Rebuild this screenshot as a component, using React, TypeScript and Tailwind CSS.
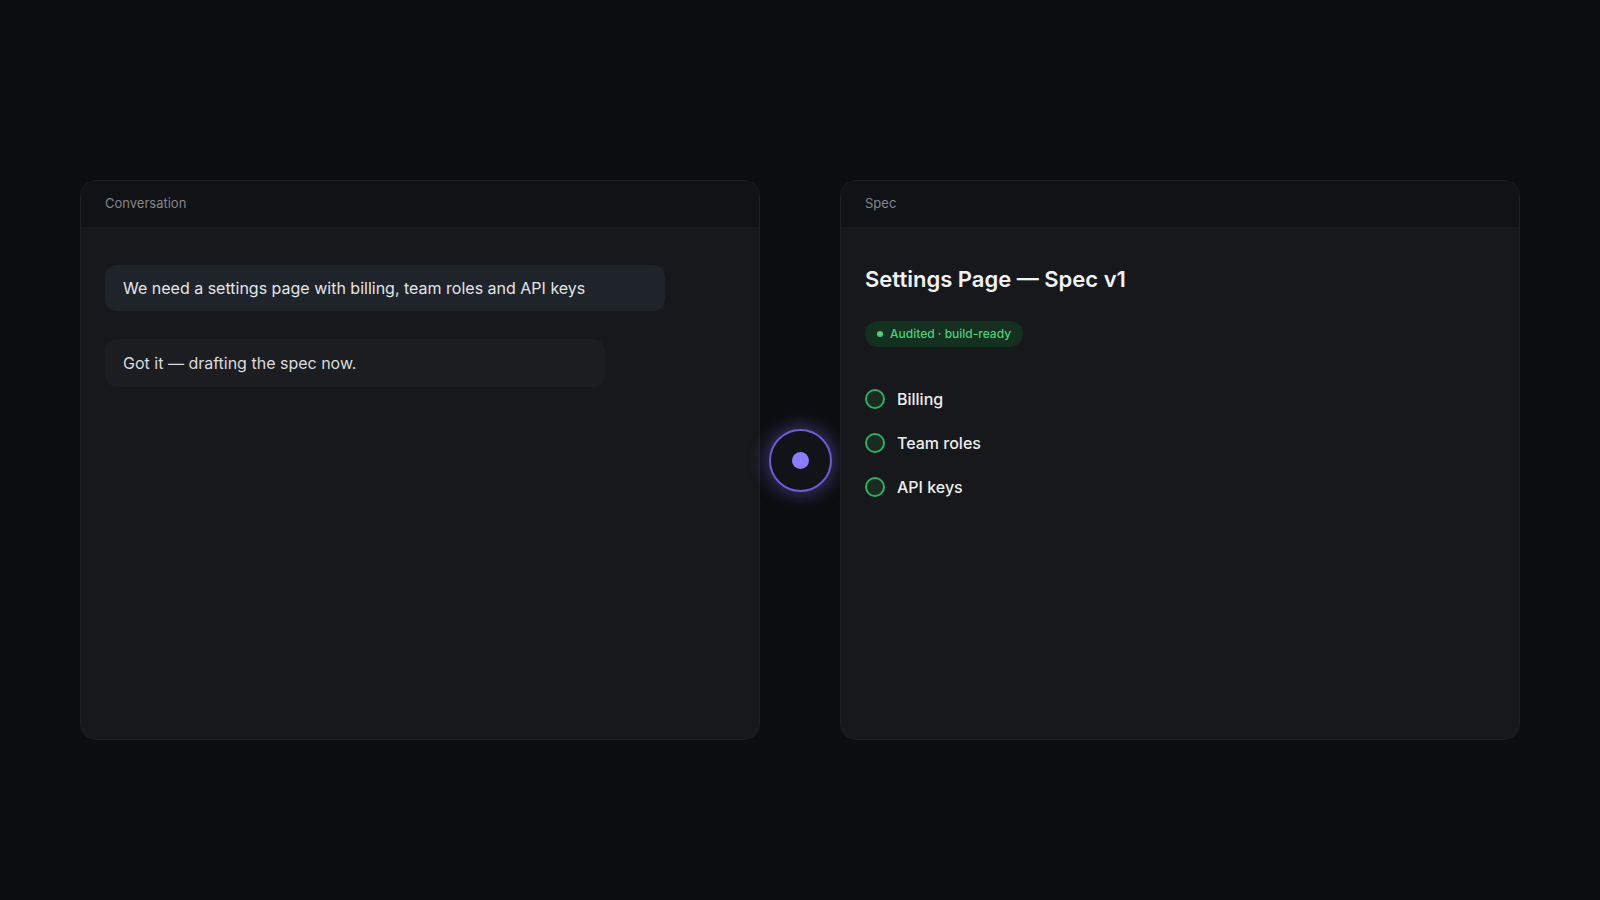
import React from "react";

function Panel({ title, children }: { title: string; children: React.ReactNode }) {
  return (
    <div className="w-[680px] h-[560px] rounded-2xl border border-[#1e1f23] bg-[#17181b] overflow-hidden flex flex-col">
      <div className="h-[46px] shrink-0 bg-[#111215] px-6 flex items-center text-[13px] text-[#84868c]">
        {title}
      </div>
      <div className="flex-1 px-6 pt-[38px]">{children}</div>
    </div>
  );
}

function Item({ label }: { label: string }) {
  return (
    <div className="h-[28px] flex items-center gap-3">
      <span className="w-[20px] h-[20px] rounded-full border-2 border-[#2fae63] bg-[#1b2b22] shrink-0" />
      <span className="text-[16px] font-medium text-[#eceef1]">{label}</span>
    </div>
  );
}

export default function App() {
  return (
    <div
      className="min-h-screen w-full bg-[#0c0d0f] flex items-start justify-center pt-[180px]"
      style={{ fontFamily: "Inter, 'Noto Sans', sans-serif" }}
    >
      <div className="flex items-center">
        <Panel title="Conversation">
          <div className="w-[560px] h-[46px] rounded-xl bg-[#1f232a] px-[18px] flex items-center text-[16px] text-[#e3e5e9]">
            We need a settings page with billing, team roles and API keys
          </div>
          <div className="mt-[28px] w-[500px] h-[48px] rounded-xl bg-[#1c1d21] px-[18px] flex items-center text-[16px] text-[#d9dbdf]">
            Got it — drafting the spec now.
          </div>
        </Panel>
        <div className="w-[80px] flex items-center justify-center">
          <div className="w-[63px] h-[63px] rounded-full border-2 border-[#6b5ccf] bg-[#121318] flex items-center justify-center shadow-[0_0_18px_3px_rgba(124,108,240,0.4)]">
            <div className="w-[17px] h-[17px] rounded-full bg-[#8a7cfb]" />
          </div>
        </div>
        <Panel title="Spec">
          <div className="text-[22px] leading-[28px] font-semibold text-[#f1f2f4]">
            Settings Page — Spec v1
          </div>
          <div className="mt-[28px] inline-flex items-center gap-[7px] h-[26px] px-3 rounded-full bg-[#14301f] text-[12px] font-medium text-[#4ccf7c]">
            <span className="w-[6px] h-[6px] rounded-full bg-[#4ccf7c]" />
            Audited · build-ready
          </div>
          <div className="mt-[38px] flex flex-col gap-4">
            <Item label="Billing" />
            <Item label="Team roles" />
            <Item label="API keys" />
          </div>
        </Panel>
      </div>
    </div>
  );
}
